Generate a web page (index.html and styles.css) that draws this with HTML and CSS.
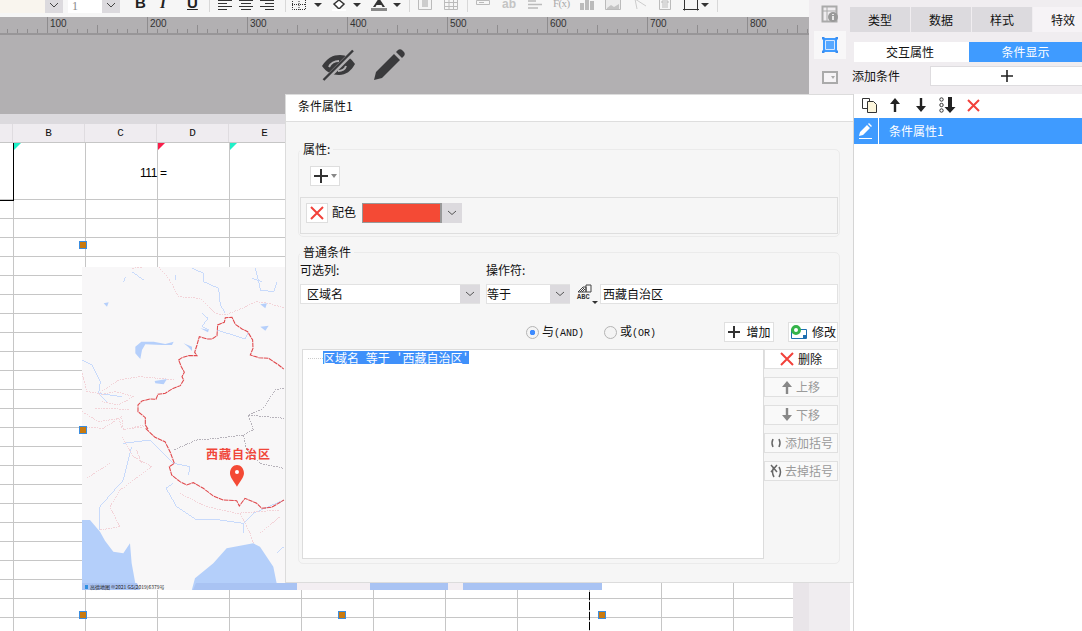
FILE: index.html
```html
<!DOCTYPE html>
<html lang="zh">
<head>
<meta charset="utf-8">
<title>条件属性</title>
<link rel="stylesheet" href="styles.css">
</head>
<body>
<div class="app">
  <div class="main">
    <div class="toolbar">
      <div class="combo c1"><span class="combo-field"></span><span class="combo-arrow"><svg width="10" height="6" viewBox="0 0 10 6"><path d="M1 0l4 4 4-4" fill="none" stroke="#444"/></svg></span></div>
      <div class="combo c2"><span class="combo-field white">1</span><span class="combo-arrow"><svg width="10" height="6" viewBox="0 0 10 6"><path d="M1 0l4 4 4-4" fill="none" stroke="#444"/></svg></span></div>
      <span class="fmt b">B</span>
      <span class="fmt i">I</span>
      <span class="fmt u">U</span>
      <i class="sep s1"></i>
      <svg class="ic a1" width="16" height="16" viewBox="0 0 16 16"><path d="M1 1.500h14M1 4.500h9M1 7.500h14M1 10.500h9" stroke="#333"/></svg>
      <svg class="ic a2" width="16" height="16" viewBox="0 0 16 16"><path d="M1 1.500h14M3 4.500h10M1 7.500h14M3 10.500h10" stroke="#333"/></svg>
      <svg class="ic a2" width="16" height="16" viewBox="0 0 16 16"><path d="M1 1.500h14M6 4.500h9M1 7.500h14M6 10.500h9" stroke="#333"/></svg>
      <i class="sep s2"></i>
      <svg class="ic a3" width="16" height="16" viewBox="0 0 16 16"><path d="M1.500 0v10.500h13V0M8 0v11M1 5.500h14" fill="none" stroke="#333" stroke-dasharray="1 1"/></svg>
      <i class="caret c-a"></i>
      <svg class="ic a4" width="16" height="16" viewBox="0 0 16 16"><path d="M8 1l5 4-5 5-5-5z" fill="#fff" stroke="#333" stroke-width="1.500"/><path d="M1 10h14v2H1z" fill="#fff"/></svg>
      <i class="caret c-b"></i>
      <svg class="ic a5" width="16" height="16" viewBox="0 0 16 16"><path d="M2 8L8 -1l6 9h-2.500l-1-2h-5l-1 2z" fill="#333"/><path d="M0 9h16v3H0z" fill="#888"/></svg>
      <i class="caret c-c"></i>
      <i class="sep s3"></i>
      <svg class="ic a6" width="16" height="16" viewBox="0 0 16 16"><path d="M1.500 0v10.500h13V0" fill="#f4f4f4" stroke="#bbb"/><path d="M5 1h6v7H5z" fill="#ccc"/></svg>
      <svg class="ic a7" width="16" height="16" viewBox="0 0 16 16"><path d="M1.500 0v10.500h13V0zM1 3.500h14M1 7.500h14M6 0v11M10.500 0v11" fill="none" stroke="#bbb"/></svg>
      <i class="sep s4"></i>
      <svg class="ic a8" width="16" height="16" viewBox="0 0 16 16"><path d="M1.500 1.500h13v4h-13zM4 3.500h5" fill="none" stroke="#bbb"/></svg>
      <span class="fmt ab">ab</span>
      <svg class="ic a9" width="16" height="16" viewBox="0 0 16 16"><path d="M1 2h8M1 5.500h14M1 9h10" stroke="#bbb" stroke-width="1.500"/></svg>
      <span class="fmt fx">F(x)</span>
      <svg class="ic a10" width="16" height="16" viewBox="0 0 16 16"><path d="M1 4h4v7H1zM6 0h4v11H6zM11 2h4v9h-4z" fill="#bbb"/></svg>
      <svg class="ic a10" width="16" height="16" viewBox="0 0 16 16"><path d="M.5 0h15v10.500H.5z" fill="#ececec" stroke="#bbb"/><path d="M2 9l4-3 3 2 5-3v5H2z" fill="#c4c4c4"/></svg>
      <svg class="ic a11" width="16" height="16" viewBox="0 0 16 16"><path d="M3 0l2 10M3 0l11 7" fill="none" stroke="#ccc"/></svg>
      <svg class="ic a12" width="16" height="16" viewBox="0 0 16 16"><path d="M2.500 0v10.500h11V0M5 2h6v2H5zM5 6h6M5 8h6" fill="none" stroke="#bbb"/></svg>
      <svg class="ic a13" width="16" height="16" viewBox="0 0 16 16"><path d="M1.500 0v11.500M14.500 0v11.500M0 10.500h16" fill="none" stroke="#333"/></svg>
      <i class="caret c-d"></i>
      <i class="sep s5"></i>
    </div>
    <div class="ruler">
      <span class="mark">100</span><span class="mark">200</span><span class="mark">300</span><span class="mark">400</span><span class="mark">500</span><span class="mark">600</span><span class="mark">700</span><span class="mark">800</span>
    </div>
    <div class="canvas">
      <svg width="36" height="32" viewBox="0 0 36 32"><path d="M1 17C6 9 12 6 19 6c6 0 11 3 15 9-4 7-9 11-16 11C11 26 5 23 1 17z" fill="#3a3a3c"/><path d="M8 18c2-4 6-6 10-6M25 17c-1 3-4 5-8 5" fill="none" stroke="#b2b0b2" stroke-width="2"/><path d="M4 31L33 2" stroke="#b2b0b2" stroke-width="5"/><path d="M2.500 31L32 1.500" stroke="#3a3a3c" stroke-width="2.400"/></svg>
      <svg width="32" height="32" viewBox="0 0 32 32"><path d="M1 31l2-8L21 5l6 6L9 29z" fill="#3a3a3c"/><path d="M23 3l2-2c1-1 3-1 4 0l2 2c1 1 1 3 0 4l-2 2z" fill="#3a3a3c"/></svg>
    </div>
    <div class="strip"></div>
    <div class="colhead">
      <span class="col-a"></span><span class="col">B</span><span class="col">C</span><span class="col">D</span><span class="col">E</span><span class="col"></span><span class="col"></span><span class="col"></span><span class="col"></span><span class="col"></span><span class="col"></span><span class="col-end"></span>
    </div>
    <div class="sheet">
      <div class="grid">
        <div class="row-first">
          <span class="cell-a"></span>
          <span class="cell flag-teal"></span>
          <span class="cell value">111</span>
          <span class="cell flag-red formula">=</span>
          <span class="cell flag-teal"></span>
        </div>
      </div>
      <div class="vscroll"></div>
    </div>
  </div>

  <div class="rail">
    <div class="rail-item r-top"><svg width="18" height="18" viewBox="0 0 18 18"><path d="M1.500 1.500h14v15h-14z" fill="none" stroke="#aaa" stroke-width="2"/><path d="M1 6h15M6 1v16" stroke="#aaa"/><circle cx="12" cy="12" r="5" fill="#999"/><path d="M12 9v1M12 11v4" stroke="#fff" stroke-width="1.500"/></svg></div>
    <div class="rail-item active"><svg width="16" height="16" viewBox="0 0 16 16"><path d="M1 1h14v14H1z" fill="#3f9bff"/><path d="M3.500 3.500h9v9h-9z" fill="#58a8ff" stroke="#d5e7ff"/><path d="M0 0h2.500v2.500H0zM13.500 0H16v2.500h-2.500zM0 13.500h2.500V16H0zM13.500 13.500H16V16h-2.500z" fill="#3a8df0"/></svg></div>
    <div class="rail-item r-bot"><svg width="16" height="13" viewBox="0 0 16 13"><path d="M1 1h14v11H1z" fill="#f6f4f6" stroke="#aaa" stroke-width="2"/><path d="M9 5h4l-2 3z" fill="#aaa"/></svg></div>
  </div>

  <div class="panel">
    <div class="panel-head">
      <div class="tabs"><span class="tab">类型</span><span class="tab">数据</span><span class="tab">样式</span><span class="tab current">特效</span></div>
      <div class="subtabs"><span class="subtab">交互属性</span><span class="subtab on">条件显示</span></div>
      <div class="addrow"><span class="addlabel">添加条件</span><span class="addbtn"><svg width="12" height="12" viewBox="0 0 12 12"><path d="M6 0v12M0 6h12" stroke="#222" stroke-width="1.600"/></svg></span></div>
    </div>
    <div class="listbox">
      <div class="listtools">
        <svg class="lt1" width="17" height="16" viewBox="0 0 17 16"><path d="M1.500 1.500h7v10h-7z" fill="#fff" stroke="#333"/><path d="M6.500 4.500h6l3 3v8h-9z" fill="#fdf6dc" stroke="#333"/></svg>
        <svg class="lt2" width="10" height="14" viewBox="0 0 10 14"><path d="M5 0l5 6H6.200v8H3.800V6H0z" fill="#222"/></svg>
        <svg class="lt3" width="10" height="14" viewBox="0 0 10 14"><path d="M5 14l5-6H6.200V0H3.800v8H0z" fill="#222"/></svg>
        <svg class="lt4" width="17" height="16" viewBox="0 0 17 16"><circle cx="2.500" cy="2.500" r="1.700" fill="none" stroke="#333"/><circle cx="2.500" cy="8" r="1.700" fill="none" stroke="#333"/><circle cx="2.500" cy="13.500" r="1.700" fill="none" stroke="#333"/><path d="M11 16l5.500-6H13V0H9v10H5.500z" fill="#222"/></svg>
        <svg class="lt5" width="13" height="13" viewBox="0 0 13 13"><path d="M1 1l11 11M12 1L1 12" stroke="#f2413a" stroke-width="2"/></svg>
      </div>
      <div class="listrow">
        <span class="listicon"><svg width="16" height="16" viewBox="0 0 16 16"><path d="M1 13l1-4 7-7 3 3-7 7zM10 1l1-1 3 3-1 1z" fill="#fff"/><path d="M1 15.500h13" stroke="#fff"/></svg></span>
        <span class="listtext">条件属性1</span>
      </div>
    </div>
  </div>

  <svg class="map" width="520" height="323" viewBox="82 267 520 323">
    <rect x="82" y="267" width="520" height="323" fill="#f8f7f8"/>
    <g transform="translate(80 350) scale(.3333)">
      <path d="M6 510H30L60 545 75 572 100 605 130 610 150 580 155 640 170 722H6z" fill="#b4cffa"/>
      <path d="M335 722L345 685 400 640 440 595 520 580 540 590 580 650 590 700V722z" fill="#b4cffa"/>
      <path d="M600 722L612 700H630V722z" fill="#b4cffa"/>
      <g fill="none" stroke="#c8dafb" stroke-width="3" shape-rendering="crispEdges">
        <path d="M155 290L130 390 60 470 60 540"/>
        <path d="M130 280L210 270 280 340 330 350 325 375"/>
        <path d="M280 400L258 415 290 470 350 510 420 510 490 520 520 490 612 450"/>
        <path d="M490 520V550M590 610L612 590"/>
      </g>
      <g fill="none" stroke="#f3d3d8" stroke-width="3" stroke-dasharray="5 3" shape-rendering="crispEdges">
        <path d="M125 260L160 320 215 350 120 420 90 470 120 530"/>
        <path d="M20 385L90 340"/>
        <path d="M10 230L70 235 125 200 130 240 190 225"/>
        <path d="M300 430L380 470 470 490 600 480"/>
        <path d="M480 490L510 550 520 580M540 550L600 500"/>
        <path d="M170 300L185 340M60 540L120 530"/>
      </g>
      <path d="M612 115L585 120 550 175 505 195 520 240 490 255 410 265 350 270 280 300M505 195L612 205M490 255L500 300 540 340 612 355" fill="none" stroke="#b6b2ba" stroke-width="3" stroke-dasharray="5 3" shape-rendering="crispEdges"/>
      <path d="M197 235L225 262 255 275 270 305 283 340 268 350 275 375 300 395 320 405 340 398 370 415 400 438 430 450 470 452 478 468 495 445 530 460 545 475 575 472 612 450" fill="none" stroke="#e0484c" stroke-width="3.200" stroke-dasharray="14 2"/>
      <path d="M450 370C450 355 460 345 471 345S492 355 492 370C492 382 480 395 471 410 462 395 450 382 450 370z" fill="#f44a35"/>
      <circle cx="471" cy="366" r="6" fill="#fff"/>
    </g>
    <g transform="translate(82 265) scale(.3333)">
      <g fill="#b5cffb">
        <path d="M160 245L178 230 215 230 250 237 275 230 270 240 240 240 190 238 180 255 175 282 160 265z"/>
        <path d="M218 348L255 342 245 358 220 355z"/>
        <path d="M65 115L80 112 75 125z"/>
        <path d="M305 235L330 245 330 258 318 245z"/>
        <path d="M535 118L555 115 550 130z"/>
        <path d="M355 190L380 195 378 202z"/>
        <path d="M535 185L560 182 550 197z"/>
      </g>
      <g fill="none" stroke="#c8dafb" stroke-width="3" shape-rendering="crispEdges">
        <path d="M330 10L365 25 365 50 410 70 415 120 430 145"/>
        <path d="M520 10L530 50 535 75 575 80 585 50"/>
        <path d="M360 145L378 160 360 185 380 195"/>
        <path d="M405 195L490 222 497 205"/>
        <path d="M0 285L30 300 55 350 50 385 75 410"/>
        <path d="M510 40L540 50M125 50L130 35M150 20L185 45M280 30V45M45 385L120 395"/>
      </g>
      <g fill="none" stroke="#f3d3d8" stroke-width="3" stroke-dasharray="5 3" shape-rendering="crispEdges">
        <path d="M225 0L260 40 290 95 355 100 385 130 400 145 430 150 480 130 520 110 560 115 610 130"/>
        <path d="M0 325L15 380 50 385 110 345 170 335 230 340 280 345"/>
        <path d="M40 430L90 430 140 435"/>
        <path d="M50 390L100 380 155 395 110 420 60 410"/>
        <path d="M0 440L50 470 110 460 120 490"/>
        <path d="M150 490L190 485M150 10L190 5"/>
      </g>
      <path d="M198 492L190 480 190 458 168 440 168 420 180 408 205 402 222 403 228 388 250 385 270 372 295 362 305 345 300 335 307 322 298 305 290 285 300 278 320 272 345 272 338 262 345 240 352 215 375 222 390 222 405 212 407 180 427 172 430 158 450 157 460 178 480 192 497 200 512 225 513 250 505 270 530 278 560 280 590 300 605 312" fill="none" stroke="#e0484c" stroke-width="3.200" stroke-dasharray="14 2"/>
    </g>
    <path d="M82 583H137L140 590H82zM193 590L196 583H297V590zM370 583H448V590H370zM463 583H602V590H463z" fill="#a9c3f3"/>
    <path d="M297 583H370V590H297zM448 583H463V590H448z" fill="#f3eef2"/>
    <path d="M85 585h3v4h-3z" fill="#2f8fe0"/>
  </svg>
  <span class="map-label">西藏自治区</span>
  <span class="map-credit">高德地图 ©2021 GS(2019)6379号</span>

  <i class="handle h1"></i><i class="handle h2"></i><i class="handle h3"></i><i class="handle h4"></i><i class="handle h5"></i>
  <i class="guide"></i>

  <section class="dialog">
    <header class="dialog-title">条件属性1</header>
    <div class="dialog-body">
      <fieldset class="group g-prop">
        <legend>属性:</legend>
        <button class="plus"><svg width="16" height="16" viewBox="0 0 16 16"><path d="M8 1v14M1 8h14" stroke="#333" stroke-width="2"/></svg><i class="mini-caret"></i></button>
        <div class="prop-box">
          <span class="x-btn"><svg width="14" height="14" viewBox="0 0 14 14"><path d="M1 1l12 12M13 1L1 13" stroke="#f2413a" stroke-width="2"/></svg></span>
          <span class="prop-name">配色</span>
          <span class="swatch"></span>
          <span class="arrow"><svg width="10" height="6" viewBox="0 0 10 6"><path d="M1 1l4 3.500L9 1" fill="none" stroke="#555"/></svg></span>
        </div>
      </fieldset>
      <fieldset class="group g-cond">
        <legend>普通条件</legend>
        <div class="labels"><span class="lab-a">可选列:</span><span>操作符:</span></div>
        <div class="fields">
          <div class="select s-col"><span class="select-val indent">区域名</span><span class="arrow"><svg width="10" height="6" viewBox="0 0 10 6"><path d="M1 1l4 3.500L9 1" fill="none" stroke="#555"/></svg></span></div>
          <div class="select s-op"><span class="select-val">等于</span><span class="arrow"><svg width="10" height="6" viewBox="0 0 10 6"><path d="M1 1l4 3.500L9 1" fill="none" stroke="#555"/></svg></span></div>
          <span class="abc"><svg width="15" height="9" viewBox="0 0 15 9"><path d="M1 8l5-5h3v5zM9 1h5v7H9z" fill="none" stroke="#444"/><path d="M3 8l4-4M5 8l3-3" stroke="#444"/></svg><span class="abc-t">ABC</span></span>
          <span class="input">西藏自治区</span>
        </div>
        <div class="actions">
          <span class="radio checked"></span><span class="radio-t rt1">与<span class="latin">(AND)</span></span>
          <span class="radio r2"></span><span class="radio-t rt2">或<span class="latin">(OR)</span></span>
          <span class="btn b-add"><svg width="14" height="14" viewBox="0 0 14 14"><path d="M7 1v12M1 7h12" stroke="#333" stroke-width="2"/></svg>增加</span>
          <span class="btn b-mod"><svg width="18" height="16" viewBox="0 0 18 16"><path d="M1.500 5.500h15v9h-15z" fill="#fff" stroke="#1d6fb0"/><circle cx="6" cy="6" r="3.500" fill="#fff" stroke="#35b34a" stroke-width="3"/><path d="M13 11h3v3h-3z" fill="#1d6fb0"/></svg>修改</span>
        </div>
        <div class="work">
          <div class="expr"><i class="tree"></i><span class="expr-sel">区域名 等于 <span class="q">'</span>西藏自治区<span class="q">'</span></span></div>
          <div class="side">
            <span class="sbtn"><svg width="14" height="14" viewBox="0 0 14 14"><path d="M1 1l12 12M13 1L1 13" stroke="#f2413a" stroke-width="2"/></svg>删除</span>
            <span class="sbtn off"><svg width="10" height="14" viewBox="0 0 10 14"><path d="M5 1l5 6H6.200v7H3.800V7H0z" fill="#888"/></svg>上移</span>
            <span class="sbtn off"><svg width="10" height="14" viewBox="0 0 10 14"><path d="M5 13l5-6H6.200V0H3.800v7H0z" fill="#888"/></svg>下移</span>
            <span class="sbtn off wide"><svg width="14" height="12" viewBox="0 0 14 12"><path d="M4 2Q2 6 4 10M10 2q2 4 0 8" fill="none" stroke="#666" stroke-width="1.500"/></svg>添加括号</span>
            <span class="sbtn off wide"><svg width="14" height="14" viewBox="0 0 14 14"><path d="M5 3Q2 8 5 13M10 3q3 5 0 10M2 1l6 7M8 1L2 8" fill="none" stroke="#666" stroke-width="1.500"/></svg>去掉括号</span>
          </div>
        </div>
      </fieldset>
    </div>
  </section>
</div>
</body>
</html>
```
FILE: styles.css
```css
* { box-sizing: border-box; }
html, body { margin: 0; height: 631px; overflow: hidden; background: #fff; }
body { font: 12px/14px "Noto Sans CJK SC", "Liberation Sans", sans-serif; color: #111; }
i { display: block; }
svg { display: block; flex: none; }

.app { position: relative; display: flex; width: 1082px; height: 631px; overflow: hidden; }
.main { width: 809px; display: flex; flex-direction: column; flex: none; }

/* toolbar */
.toolbar { height: 17px; background: #f6f6f6; display: flex; overflow: hidden; flex: none; }
.combo { display: flex; height: 13px; flex: none; }
.c1 { width: 63px; }
.c1 .combo-field { flex: 1; background: #f9f5ee; }
.c2 { width: 52px; margin-left: 5px; }
.combo-field { display: block; font: 12px/12px "Liberation Serif", serif; color: #888; padding-left: 4px; }
.combo-field.white { flex: 1; background: #fff; }
.combo-arrow { width: 18px; background: #dcdade; display: flex; justify-content: center; padding-top: 3px; }
.fmt { font: bold 15px/16px "Liberation Sans", sans-serif; margin-top: -5px; flex: none; color: #222; }
.fmt.b { margin-left: 15px; width: 11px; }
.fmt.i { margin-left: 14px; width: 8px; font-family: "Liberation Serif", serif; font-style: italic; }
.fmt.u { margin-left: 19px; width: 11px; text-decoration: underline; }
.fmt.ab { margin-left: 11px; width: 15px; font-size: 12px; margin-top: -4px; color: #c4c4c4; }
.fmt.fx { margin-left: 10px; width: 16px; font: 11px/14px "Liberation Serif", serif; letter-spacing: -.6px; margin-top: -4px; color: #aaa; white-space: nowrap; }
.sep { width: 1px; height: 12px; background: #d8d8d8; flex: none; }
.s1 { margin-left: 11px; }
.s2 { margin-left: 10px; }
.s3 { margin-left: 8px; }
.s4 { margin-left: 8px; }
.s5 { margin-left: 8px; }
.ic { margin-top: -1px; }
.a1 { margin-left: 7px; }
.a2 { margin-left: 5px; }
.a3 { margin-left: 5px; }
.a4 { margin-left: 9px; }
.a5 { margin-left: 10px; }
.a6 { margin-left: 7px; }
.a7 { margin-left: 10px; }
.a8 { margin-left: 7px; }
.a9 { margin-left: 10px; }
.a10 { margin-left: 10px; }
.a11 { margin-left: 11px; }
.a12 { margin-left: 9px; }
.a13 { margin-left: 10px; }
.caret { width: 0; height: 0; border: 4px solid transparent; border-top: 4px solid #333; border-bottom: 0; margin-top: 3px; flex: none; }
.c-a { margin-left: 7px; }
.c-b { margin-left: 6px; }
.c-c { margin-left: 6px; }
.c-d { margin-left: 2px; }

/* ruler */
.ruler {
  height: 18px; flex: none; display: flex; padding-left: 47px; overflow: hidden;
  background-color: #b2b0b2;
  border-bottom: 2px solid #989698;
  background-image: repeating-linear-gradient(90deg, #8e8c8e 0 1px, transparent 1px 10px);
  background-size: 100% 4px; background-repeat: no-repeat; background-position: 7px 100%;
}
.mark { flex: 0 0 100px; border-left: 1px solid #8e8c8e; font: 10px/13px "Liberation Sans", sans-serif; color: #333; padding: 0 0 0 2px; height: 16px; background: linear-gradient(#8e8c8e, #8e8c8e) 49px 8px / 1px 8px no-repeat; }

/* canvas */
.canvas { height: 79px; flex: none; background: #b2b0b2; display: flex; gap: 16px; padding: 14px 0 0 321px; }
.strip { height: 10px; flex: none; background: #dcdade; }
.colhead { height: 19px; flex: none; display: flex; background: #efecf0; border-bottom: 1px solid #c6c6c6; }
.col-a { width: 13px; border-right: 1px solid #dfdce0; }
.col { width: 72px; border-right: 1px solid #dfdce0; font: 11px/18px "Liberation Mono", monospace; text-align: center; color: #111; }
.col-end { width: 60px; }

/* sheet */
.sheet { flex: 1; display: flex; min-height: 0; }
.grid {
  width: 793px;
  background-color: #fff;
  background-image:
    linear-gradient(90deg, #c6c6c6 0 1px, transparent 1px),
    linear-gradient(#c6c6c6 0 1px, transparent 1px);
  background-size: 72px 100%, 100% 19px;
  background-position: 13px 0, 0 18px;
}
.vscroll { width: 16px; background: #e9e5e9; }
.row-first { display: flex; height: 57px; background: #fff; border-bottom: 1px solid #c6c6c6; }
.cell-a { width: 14px; border: solid #000; border-width: 0 1px 1px 0; height: 58px; }
.cell { position: relative; width: 72px; border-right: 1px solid #c6c6c6; line-height: 60px; font-size: 12px; font-family: "Liberation Sans", sans-serif; color: #000; }
.value { text-align: right; letter-spacing: -.4px; }
.formula { padding-left: 2px; }
.flag-teal::before, .flag-red::before { content: ""; position: absolute; left: 0; top: 0; border-style: solid; border-width: 7px 7px 0 0; border-color: #1ff0c8 transparent transparent transparent; }
.flag-red::before { border-color: #fa1e4a transparent transparent transparent; }

/* rail */
.rail { width: 41px; flex: none; background: #f0edf0; display: flex; flex-direction: column; align-items: center; }
.rail-item { width: 32px; display: flex; align-items: center; justify-content: center; }
.r-top { height: 27px; margin-bottom: 4px; }
.r-bot { height: 36px; }
.rail-item.active { background: #f8f7f8; height: 28px; }

/* right panel */
.panel { width: 232px; min-width: 0; flex: none; overflow: hidden; background: #fff; display: flex; flex-direction: column; }
.panel-head { height: 94px; background: #f0edf0; padding-top: 7px; flex: none; }
.tabs { display: flex; gap: 1px; height: 25px; }
.tab { width: 60px; flex: none; background: #dcdade; text-align: center; line-height: 25px; }
.tab.current { background: #f6f3f6; }
.subtabs { display: flex; margin: 10px 0 0 4px; height: 20px; }
.subtab { width: 115px; background: #fff; text-align: center; line-height: 20px; flex: none; padding-right: 3px; }
.subtab.on { width: 113px; padding-right: 0; background: #3f9bff; color: #fff; }
.addrow { display: flex; margin: 4px 0 0 2px; height: 20px; align-items: center; }
.addlabel { width: 78px; }
.addbtn { flex: 1; height: 20px; background: #fff; border: 1px solid #dedcdf; border-right: 0; display: flex; align-items: center; justify-content: center; }
.listbox { flex: 1; margin-left: 3px; border-left: 1px solid #d5d5d5; }
.listtools { height: 24px; display: flex; align-items: center; background: #fff; padding-bottom: 2px; }
.lt1 { margin-left: 7px; }
.lt2 { margin-left: 12px; }
.lt3 { margin-left: 16px; }
.lt4 { margin-left: 13px; }
.lt5 { margin-left: 11px; }
.listrow { height: 26px; background: #3f9bff; color: #fff; display: flex; align-items: center; }
.listicon { width: 25px; height: 26px; border-right: 1px solid #fff; display: flex; align-items: center; justify-content: center; }
.listtext { margin-left: 10px; }

/* map */
.map { position: absolute; left: 82px; top: 267px; }
.map-label { position: absolute; left: 206px; top: 447px; font-size: 12px; font-weight: 700; color: #f0463a; letter-spacing: 1px; line-height: 14px; }
.map-credit { position: absolute; left: 90px; top: 584px; font: 5px/6px "Noto Sans CJK SC", sans-serif; color: #222; white-space: nowrap; }

.handle { position: absolute; width: 8px; height: 8px; background: #c97a10; border: 1px solid #3a8de0; }
.h1 { left: 79px; top: 241px; }
.h2 { left: 79px; top: 426px; }
.h3 { left: 79px; top: 611px; }
.h4 { left: 338px; top: 611px; }
.h5 { left: 598px; top: 611px; }
.guide { position: absolute; left: 589px; top: 592px; width: 1px; height: 39px; background: repeating-linear-gradient(#000 0 8px, transparent 8px 10px); }

/* dialog */
.dialog { position: absolute; left: 285px; top: 94px; width: 568px; height: 489px; background: #f6f6f6; border: solid #dcdcdc; border-width: 1px 0 1px 1px; display: flex; flex-direction: column; }
.dialog-title { height: 27px; background: #fff; border-bottom: 1px solid #dedede; padding: 3px 0 0 12px; line-height: 16px; flex: none; }
.dialog-body { padding: 20px 13px 0 12px; }
.group { margin: 0; padding: 0 1px; border: 1px solid #ebebeb; border-radius: 5px; min-width: 0; }
.group legend { padding: 0 3px; margin-left: 0; line-height: 14px; font-size: 12px; }
.g-prop { height: 95px; }
.plus { display: flex; align-items: center; margin: 10px 0 0 10px; width: 30px; height: 20px; background: #fff; border: 1px solid #dedede; padding: 0 0 0 2px; }
.mini-caret { width: 0; height: 0; border: 3px solid transparent; border-top: 4px solid #888; border-bottom: 0; margin-left: 2px; }
.prop-box { margin-top: 11px; height: 37px; border: 1px solid #dedede; display: flex; align-items: flex-start; padding: 5px 0 0 5px; }
.x-btn { width: 22px; height: 20px; background: #fff; border: 1px solid #dedede; display: flex; align-items: center; justify-content: center; }
.prop-name { margin-left: 4px; line-height: 18px; width: 30px; }
.swatch { width: 80px; height: 20px; background: #f44a35; border: 1px solid #999; border-width: 1px 2px 1px 1px; }
.arrow { width: 20px; height: 20px; background: #dcdade; display: flex; align-items: center; justify-content: center; flex: none; }
.g-cond { height: 319px; margin-top: 8px; }
.labels { display: flex; margin-top: 4px; height: 21px; }
.lab-a { width: 186px; }
.fields { display: flex; height: 20px; }
.select { display: flex; background: #fff; border: solid #e2e2e2; border-width: 1px 0 1px 1px; height: 20px; }
.select .arrow { height: 18px; }
.select-val { flex: 1; line-height: 17px; }
.select-val.indent { padding-left: 6px; }
.s-col { width: 180px; }
.s-op { width: 84px; margin-left: 6px; }
.abc { position: relative; width: 22px; margin-left: 7px; flex: none; display: flex; flex-direction: column; align-items: flex-start; }
.abc::after { content: ""; position: absolute; left: 15px; top: 17px; border: 3px solid transparent; border-top: 3px solid #333; border-bottom: 0; }
.abc-t { font: bold 7px/8px "Liberation Mono", monospace; color: #333; }
.input { width: 238px; margin-left: 1px; height: 20px; background: #fff; border: 1px solid #e2e2e2; padding-left: 2px; line-height: 17px; }
.actions { display: flex; align-items: center; height: 20px; margin-top: 18px; }
.radio { width: 13px; height: 13px; border-radius: 50%; border: 1px solid #b4b4b4; background: #f4f4f4; margin-left: 226px; flex: none; }
.radio.checked { background: radial-gradient(circle, #3f8cff 0 2.500px, #f4f4f4 3px); }
.radio.r2 { margin-left: 11px; }
.radio-t { margin-left: 3px; flex: none; white-space: nowrap; }
.rt1 { width: 51px; }
.rt2 { width: 50px; }
.latin { font: 10px/14px "Liberation Mono", monospace; }
.btn { display: flex; align-items: center; justify-content: center; gap: 5px; width: 50px; height: 20px; background: #fff; border: 1px solid #e0e0e0; flex: none; }
.b-add { margin-left: 54px; }
.b-mod { margin-left: 14px; gap: 4px; }
.work { display: flex; margin: 7px 0 0 2px; }
.expr { width: 462px; height: 210px; background: #fff; border: 1px solid #dcdcdc; display: flex; align-items: flex-start; padding: 1px 0 0 5px; }
.tree { width: 15px; margin-top: 7px; border-top: 1px dotted #ccc; }
.expr-sel { background: #3f90fa; color: #fff; line-height: 13px; height: 13px; white-space: nowrap; word-spacing: 4px; padding-right: 1px; }
.q { display: inline-block; width: 6px; text-align: center; }
.side { width: 74px; display: flex; flex-direction: column; gap: 8px; }
.sbtn { height: 20px; background: #f9f9f9; border: 1px solid #e0e0e0; display: flex; align-items: center; justify-content: center; gap: 4px; }
.sbtn:first-child { background: #fff; }
.sbtn.off { color: #9a9a9a; }
.sbtn.wide { gap: 2px; }
```
